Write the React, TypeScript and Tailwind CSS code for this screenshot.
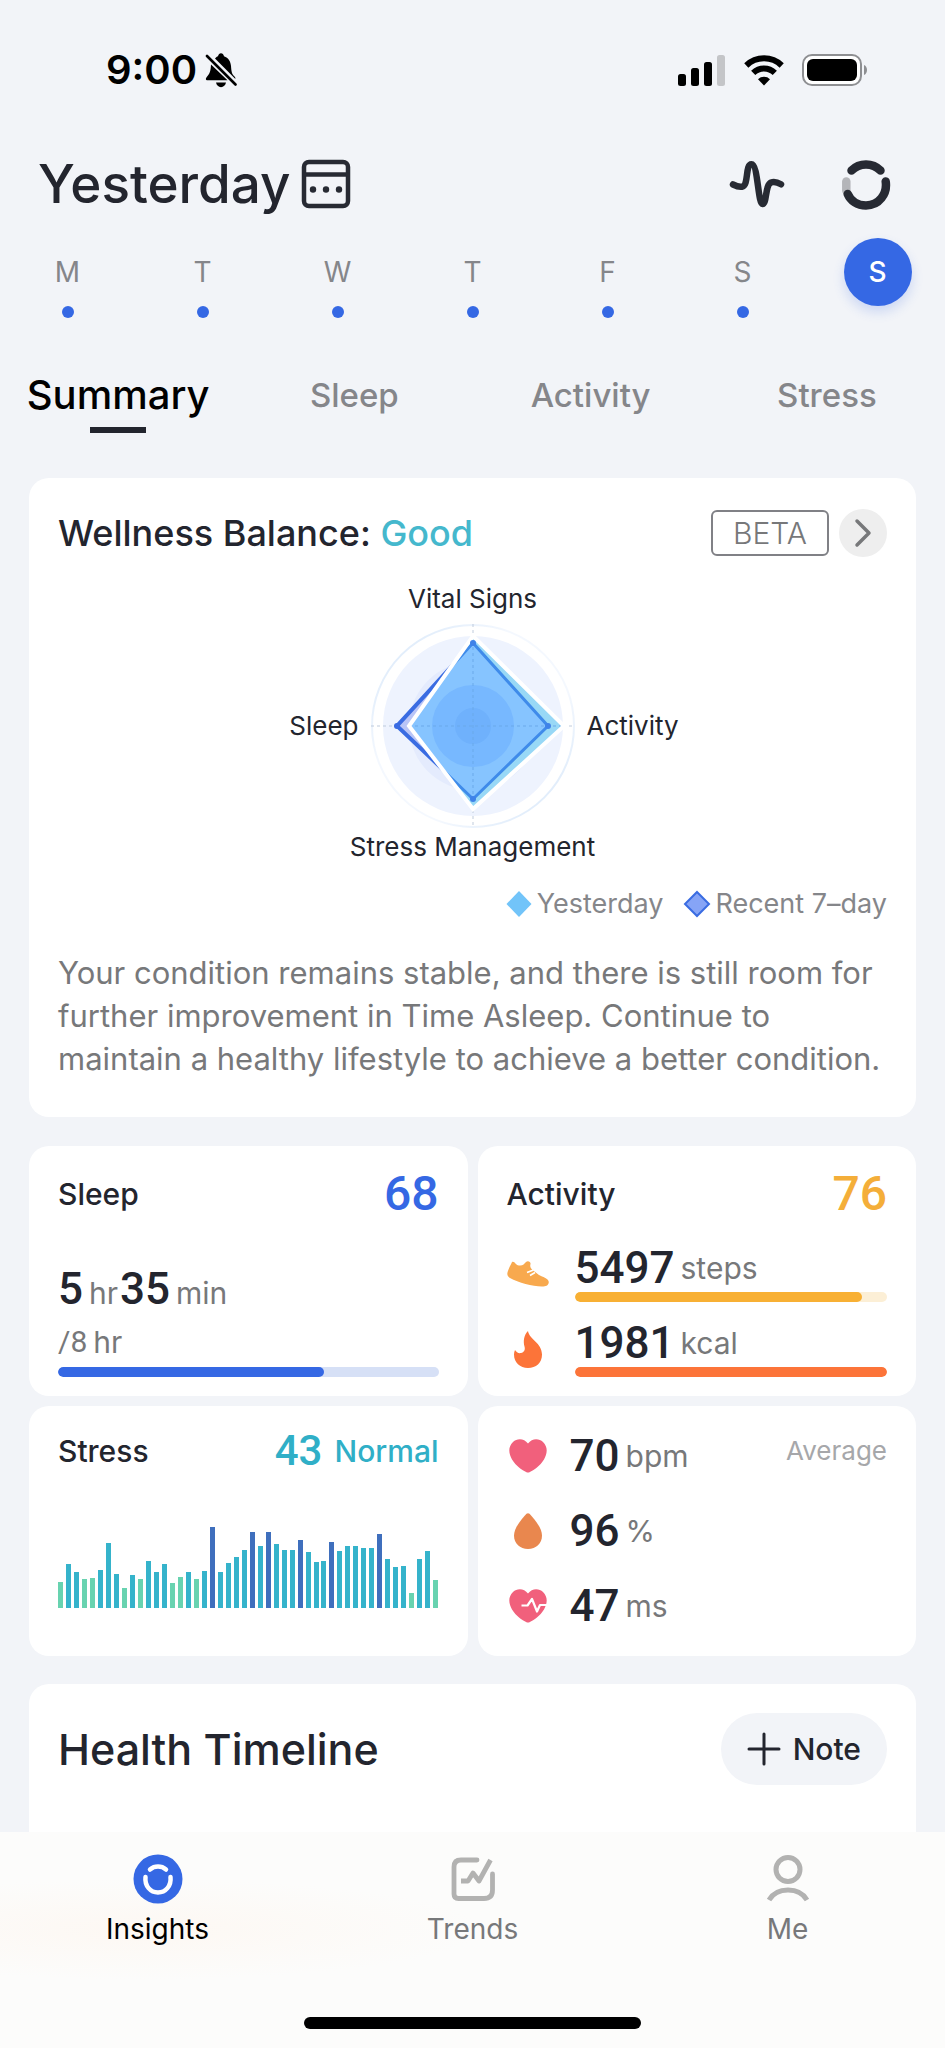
import type { ReactNode } from "react";
import { ChevronRight } from "lucide-react";

const days = ["M", "T", "W", "T", "F", "S", "S"];
const tabs = ["Summary", "Sleep", "Activity", "Stress"];

const stress = [
  26, 44, 36, 29, 30, 38, 65, 34, 20, 33, 29, 47, 36, 44, 25, 31, 36, 29, 37,
  81, 36, 45, 51, 58, 76, 62, 76, 64, 58, 58, 68, 56, 46, 47, 66, 57, 62, 62,
  60, 60, 74, 49, 41, 42, 15, 49, 57, 28,
];

const barColor = (v: number) => {
  if (v <= 31) return "bg-[#68d3b0]";
  if (v >= 66) return "bg-[#3f6fbd]";
  return "bg-[#35b3cb]";
};

/* ---------- icons ---------- */

const BellOff = () => (
  <svg viewBox="0 0 32 35" className="h-[35px] w-8" aria-hidden="true">
    <path
      d="M10 5.5C11 4.2 12 3.6 13 3.2C13.4 1.2 14.6.2 16 .2s2.600 1 3 3c4.500 1.600 6.600 5 7 9.800.4 5 .6 8 3.500 10.600.8.700.9 1.400.9 2.400z"
      fill="#000"
    />
    <path
      d="M6 11.500L22.500 27.200H2C.8 27.200.4 25.500 1.600 24.200 5 20.500 5.700 17.500 6 11.500z"
      fill="#000"
    />
    <path d="M11 29.600h10c-.6 2.800-2.400 4.600-5 4.600s-4.400-1.800-5-4.600z" fill="#000" />
    <path d="M2 3l28.500 28.500" stroke="#000" strokeWidth="2.600" strokeLinecap="round" />
  </svg>
);

const Signal = () => (
  <svg viewBox="0 0 48 31" className="h-[31px] w-12" aria-hidden="true">
    <rect x="0" y="19" width="8" height="12" rx="2.500" />
    <rect x="13" y="13" width="8" height="18" rx="2.500" />
    <rect x="26" y="7" width="8" height="24" rx="2.500" />
    <rect x="39" y="0" width="8" height="31" rx="2.500" fill="#c4c5c8" />
  </svg>
);

const Wifi = () => (
  <svg viewBox="0 0 40 31" className="h-[31px] w-10" aria-hidden="true">
    <g fill="none" stroke="#000" strokeWidth="6">
      <path d="M2.300 10.500a25.500 25.500 0 0 1 35.400 0" />
      <path d="M9.200 17.800a15.500 15.500 0 0 1 21.600 0" />
    </g>
    <path d="M20 30.500l-6-6.200a8.600 8.600 0 0 1 12 0z" />
  </svg>
);

const Battery = () => (
  <svg viewBox="0 0 66 32" className="h-8 w-[66px]" aria-hidden="true">
    <rect x="1" y="1" width="58" height="30" rx="9" fill="#fff" stroke="#8e8f92" strokeWidth="2" />
    <rect x="5" y="5" width="50" height="22" rx="6" />
    <path d="M62 11c4 1.500 4 8.500 0 10z" fill="#8e8f92" />
  </svg>
);

const CalendarIcon = () => (
  <svg viewBox="0 0 50 50" className="size-[50px]" fill="none" stroke="#272a33" strokeWidth="4.500">
    <rect x="3" y="3" width="44" height="44" rx="5" />
    <path d="M3 15.500h44" />
    <g fill="#272a33" stroke="none">
      <circle cx="12" cy="30.500" r="3.200" />
      <circle cx="25" cy="30.500" r="3.200" />
      <circle cx="38" cy="30.500" r="3.200" />
    </g>
  </svg>
);

const PulseIcon = () => (
  <svg viewBox="0 0 56 48" className="h-12 w-14" fill="none" stroke="#272a33" strokeWidth="6.500" strokeLinecap="round">
    <path d="M4 24.500c3 1.500 6 2.700 9 2.200 7-1 3-22.500 9.500-22.500S29 44 33.500 44 36 25 42 22.500c3.500-1.200 6.500-.2 10 1.800" />
  </svg>
);

const RingIcon = () => (
  <svg viewBox="0 0 50 52" className="h-[52px] w-[50px]" fill="none" strokeWidth="8.500" strokeLinecap="round">
    <path d="M5.300 23.500v9" stroke="#b4b5b9" />
    <path d="M10.500 12.500a20.500 20.500 0 0 1 29 0" stroke="#272a33" />
    <path d="M44.700 23.500C46.500 36 38 47.500 25 47.500 16 47.500 9.500 42.500 6.700 36" stroke="#272a33" />
  </svg>
);

const ShoeIcon = () => (
  <svg viewBox="0 0 42 26" className="h-[26px] w-[42px]" aria-hidden="true">
    <path
      d="M5 1C8 0 8 4 12 4.500S17 3 19 1c2-2 5 0 4.500 2S23 7 25.500 9L32 14c4 2 8.500 3.500 9.500 6s-1 5.500-5 5.500C27 26 12 22 3 17c-2.500-1.500-3-3.500-2.500-5.500C1.500 7.500 3.500 4.500 5 1z"
      fill="#f8a94e"
    />
    <path d="M20 11.500l6.500-2.500M23 14.500l5-3" stroke="#fff" strokeWidth="1.700" />
  </svg>
);

const FlameIcon = () => (
  <svg viewBox="0 0 28 37" className="h-[37px] w-7" aria-hidden="true">
    <path
      d="M14 0C15 8 28 12 28 23.500 28 32 22 37 14 37 6 37 0 31.500 0 23.500 0 22 .3 20.500 1 19c1.500 2.500 3.500 3.500 6 3 3-.6 4.500-3 3.500-6.500C9 10 10 4 14 0z"
      fill="#fc7439"
    />
  </svg>
);

const HeartIcon = ({ pulse = false }: { pulse?: boolean }) => (
  <svg viewBox="0 0 38 34" className="h-[34px] w-[38px]" aria-hidden="true">
    <path
      d="M19 4.500C15-1 8-1 4 3-1.500 8.500 0 15 3 20.500 7 27 13 31 17.500 33.200q1.500.8 3 0C25 31 31 27 35 20.500 38 15 39.500 8.500 34 3 30-1 23-1 19 4.500z"
      fill="#f1607c"
    />
    {pulse && (
      <path d="M12.500 16.500h6L23 10l5 12.500 3-6.500h8" fill="none" stroke="#fff" strokeWidth="2.200" strokeLinejoin="round" />
    )}
  </svg>
);

const DropIcon = () => (
  <svg viewBox="0 0 28 36" className="h-9 w-7" aria-hidden="true">
    <path
      d="M12.500.8Q14-.4 15.500.8C21 7 28 15 28 22.500 28 30.500 22 36 14 36S0 30.500 0 22.500C0 15 7 7 12.500.8z"
      fill="#e9874e"
    />
  </svg>
);

const PlusIcon = () => (
  <svg viewBox="0 0 34 34" className="size-[34px]" fill="none" stroke="#23252e" strokeWidth="3" strokeLinecap="round">
    <path d="M17 2v30M2 17h30" />
  </svg>
);

const InsightsIcon = () => (
  <svg viewBox="0 0 50 50" className="size-[50px]" fill="none" stroke="#fff" strokeWidth="4.500" strokeLinecap="round">
    <circle cx="25" cy="25" r="24.500" fill="#3568e4" stroke="none" />
    <path d="M17 15.500a12.500 12.500 0 0 1 16 0" />
    <path d="M12.500 23c-1 9 5 15.500 12.500 15.500S38.500 32 37.500 23" />
  </svg>
);

const TrendsIcon = () => (
  <svg viewBox="0 0 50 50" className="size-[50px]" fill="none" stroke="#b2b2b1" strokeWidth="4.800">
    <path d="M29 6H13Q6 6 6 13V40Q6 44.500 10.500 44.500H36Q44.500 44.500 44.500 36V20" strokeLinecap="round" />
    <path d="M13 27h7l5-8 6 8 11.500-21" strokeLinejoin="round" />
  </svg>
);

const MeIcon = () => (
  <svg viewBox="0 0 50 50" className="size-[50px]" fill="none" stroke="#b2b2b1" strokeWidth="5">
    <circle cx="25" cy="15.500" r="12" />
    <path d="M6 46c3.500-6 10-10 19-10s15.500 4 19 10" />
  </svg>
);

const RadarChart = () => (
  <svg viewBox="0 0 204 204" className="size-[204px]" role="img" aria-label="Wellness balance chart">
    <defs>
      <linearGradient id="ring" x1="0" y1="0" x2="1" y2="1">
        <stop offset="0" stopColor="#d5e6f9" />
        <stop offset=".35" stopColor="#f4f8fe" />
        <stop offset=".65" stopColor="#f4f8fe" />
        <stop offset="1" stopColor="#d5e6f9" />
      </linearGradient>
      <clipPath id="inner">
        <path d="M102 12L193 102 102 185 38 102z" />
      </clipPath>
    </defs>
    <circle cx="102" cy="102" r="101" fill="#fff" stroke="url(#ring)" strokeWidth="2" />
    <circle cx="102" cy="102" r="90" fill="#eef3fe" />
    <circle cx="102" cy="102" r="64" fill="#e4ebfd" />
    <path d="M102 0V204M0 102H204" stroke="#bfcbdc" strokeWidth="1" strokeDasharray="3 3" />
    <path d="M102 19L177 102 102 174 26 102z" fill="#b9c5f7" stroke="#3a6ce2" strokeWidth="4" />
    <path d="M102 12L193 102 102 185 38 102z" fill="#98d8f6" />
    <g clipPath="url(#inner)">
      <path d="M102 19L177 102 102 175 26 102z" fill="#86c4ff" stroke="#3f8bea" strokeWidth="3" />
      <circle cx="102" cy="102" r="41" fill="#77b8ff" />
      <circle cx="102" cy="102" r="18" fill="#6fb1fc" />
      <path d="M102 17V176M38 102H191" stroke="#6aa9ea" strokeWidth="1" strokeDasharray="3 3" />
    </g>
    <path d="M102 12L193 102 102 185 38 102z" fill="none" stroke="#fff" strokeWidth="4" />
    <g fill="#3f82e8">
      <circle cx="102" cy="19" r="3" />
      <circle cx="177" cy="102" r="3" />
      <circle cx="102" cy="175" r="3" />
      <circle cx="26" cy="102" r="3" fill="#3a6ce2" />
    </g>
  </svg>
);

/* ---------- building blocks ---------- */

const Card = ({ className = "", children }: { className?: string; children: ReactNode }) => (
  <section className={`rounded-[20px] bg-white px-[29px] ${className}`}>{children}</section>
);

const Metric = ({ value, unit, baseline = false }: { value: string; unit: string; baseline?: boolean }) => (
  <span className={`flex h-11 gap-[6px] ${baseline ? "items-baseline" : "items-center"}`}>
    <span className="font-['Roboto',sans-serif] text-[44px] leading-[44px] font-medium text-[#23252e]">
      {value}
    </span>
    <span className="text-[30px] leading-[30px] text-[#77787a]">{unit}</span>
  </span>
);

const Progress = ({ value, track, fill }: { value: number; track: string; fill: string }) => (
  <div className={`h-[10px] w-full overflow-hidden rounded-full ${track}`}>
    <div className={`h-full rounded-full ${fill}`} style={{ width: `${value}%` }} />
  </div>
);

const NavItem = ({ icon, label, active = false }: { icon: ReactNode; label: string; active?: boolean }) => (
  <a href="#" className={`flex flex-col items-center gap-2 ${active ? "text-black" : "text-[#77787a]"}`}>
    {icon}
    <span className="text-[28px] leading-[34px]">{label}</span>
  </a>
);

export default function App() {
  return (
    <div className="flex min-h-screen flex-col bg-[#f2f4f8] font-['Inter',sans-serif] text-[#23252e]">
      {/* Status bar */}
      <div className="flex h-[140px] items-center justify-between pr-[77px] pl-[106px]">
        <div className="flex items-center gap-2">
          <span className="text-[40px] font-semibold text-black">9:00</span>
          <BellOff />
        </div>
        <div className="flex items-center gap-[18px]">
          <Signal />
          <Wifi />
          <Battery />
        </div>
      </div>

      {/* Header */}
      <header className="flex h-[88px] items-center justify-between pr-[54px] pl-[38px]">
        <button type="button" className="flex items-center gap-[10px]">
          <h1 className="text-[53px] leading-[60px] font-medium">Yesterday</h1>
          <CalendarIcon />
        </button>
        <div className="flex items-center gap-14">
          <button type="button" aria-label="Measure">
            <PulseIcon />
          </button>
          <button type="button" aria-label="Ring">
            <RingIcon />
          </button>
        </div>
      </header>

      {/* Week strip */}
      <div className="grid grid-cols-7 pt-[10px]">
        {days.map((day, i) => {
          const selected = i === days.length - 1;
          return (
            <button key={i} type="button" className="flex flex-col items-center">
              <span
                className={`flex size-[68px] items-center justify-center rounded-full text-[28px] ${
                  selected
                    ? "bg-[#3568e4] font-medium text-white shadow-[0_6px_12px_rgba(53,104,228,0.2)]"
                    : "text-[#85868a]"
                }`}
              >
                {day}
              </span>
              {!selected && <span className="size-3 rounded-full bg-[#3568e4]" />}
            </button>
          );
        })}
      </div>

      {/* Tabs */}
      <nav className="mt-[47px] grid grid-cols-4">
        {tabs.map((tab, i) => (
          <button key={tab} type="button" className="flex h-[68px] flex-col items-center justify-between">
            <span
              className={`leading-[60px] font-medium ${
                i === 0 ? "text-[40px] text-black" : "text-[33px] text-[#85868a]"
              }`}
            >
              {tab}
            </span>
            {i === 0 && <span className="h-[6px] w-14 bg-[#23252e]" />}
          </button>
        ))}
      </nav>

      <main className="flex flex-1 flex-col px-[29px] pt-[45px]">
        {/* Wellness balance */}
        <Card className="pt-[31px] pb-[37px]">
          <div className="flex items-center justify-between">
            <h2 className="text-[36px] leading-[48px] font-medium">
              Wellness Balance: <span className="text-[#45b8cd]">Good</span>
            </h2>
            <div className="flex items-center gap-[10px]">
              <span className="flex h-[46px] items-center rounded-md border-2 border-[#808186] px-5 text-[30px] font-light text-[#77787a]">
                BETA
              </span>
              <button
                type="button"
                aria-label="Details"
                className="flex size-12 items-center justify-center rounded-full bg-[#eeeeee] text-[#77787a]"
              >
                <ChevronRight className="size-12" strokeWidth={1.75} />
              </button>
            </div>
          </div>

          <div className="mt-[25px] text-center text-[26px] leading-[34px]">
            <p>Vital Signs</p>
            <div className="mt-2 grid grid-cols-[1fr_auto_1fr] items-center gap-3">
              <span className="text-right">Sleep</span>
              <RadarChart />
              <span className="text-left">Activity</span>
            </div>
            <p className="mt-[2px]">Stress Management</p>
          </div>

          <div className="mt-[23px] flex justify-end gap-5 text-[27px] leading-[34px] text-[#85868a]">
            <span className="flex items-center gap-1">
              <svg viewBox="0 0 28 28" className="size-7">
                <path d="M14 1l12.500 13L14 27 1.500 14z" fill="#72c4f9" />
              </svg>
              Yesterday
            </span>
            <span className="flex items-center gap-1">
              <svg viewBox="0 0 28 28" className="size-7">
                <path d="M14 2l12 12-12 12L2 14z" fill="#86a4f6" stroke="#3a6ce2" strokeWidth="2" />
              </svg>
              Recent 7–day
            </span>
          </div>

          <p className="mt-[30px] text-[31px] leading-[43px] text-[#77787a]">
            Your condition remains stable, and there is still room for further
            improvement in Time Asleep. Continue to maintain a healthy
            lifestyle to achieve a better condition.
          </p>
        </Card>

        {/* Metric cards */}
        <div className="mt-[29px] grid grid-cols-2 gap-[10px]">
          <Card className="flex h-[250px] flex-col pt-5 pb-[19px]">
            <div className="flex h-[56px] items-center justify-between">
              <h2 className="text-[30px] font-medium">Sleep</h2>
              <span className="font-['Roboto',sans-serif] text-[48px] font-medium text-[#3568e4]">68</span>
            </div>
            <div className="mt-auto">
              <div className="flex gap-[2px]">
                <Metric value="5" unit="hr" baseline />
                <Metric value="35" unit="min" baseline />
              </div>
              <p className="mt-[14px] mb-2 flex gap-[6px] text-[30px] leading-[34px] text-[#77787a]">
                <span className="font-['Roboto',sans-serif]">/8</span>
                <span>hr</span>
              </p>
              <Progress value={70} track="bg-[#d6e0f6]" fill="bg-[#3568e4]" />
            </div>
          </Card>

          <Card className="flex h-[250px] flex-col pt-5 pb-[19px]">
            <div className="flex h-[56px] items-center justify-between">
              <h2 className="text-[30px] font-medium">Activity</h2>
              <span className="font-['Roboto',sans-serif] text-[48px] font-medium text-[#f4ae39]">76</span>
            </div>
            <div className="mt-auto grid grid-cols-[42px_1fr] items-center gap-x-[26px] gap-y-[19px]">
              <ShoeIcon />
              <div>
                <Metric value="5497" unit="steps" />
                <div className="mt-[2px]">
                  <Progress value={92} track="bg-[#fcefd6]" fill="bg-[#f8b034]" />
                </div>
              </div>
              <span className="flex justify-center">
                <FlameIcon />
              </span>
              <div>
                <Metric value="1981" unit="kcal" />
                <div className="mt-[2px]">
                  <Progress value={100} track="bg-[#fde3d6]" fill="bg-[#fc7439]" />
                </div>
              </div>
            </div>
          </Card>

          <Card className="flex h-[250px] flex-col pt-5 pb-[48px]">
            <div className="flex h-[50px] items-center justify-between">
              <h2 className="text-[30px] font-medium">Stress</h2>
              <p className="flex items-center gap-3 font-medium text-[#30afc7]">
                <span className="font-['Roboto',sans-serif] text-[42px] leading-[50px]">43</span>
                <span className="text-[30px]">Normal</span>
              </p>
            </div>
            <div className="mt-auto flex items-end justify-between">
              {stress.map((v, i) => (
                <span key={i} className={`w-[5px] ${barColor(v)}`} style={{ height: v }} />
              ))}
            </div>
          </Card>

          <Card className="flex h-[250px] items-start justify-between pt-[28px]">
            <div className="grid grid-cols-[42px_auto] items-center gap-x-[21px] gap-y-[31px]">
              <span className="flex justify-center">
                <HeartIcon />
              </span>
              <Metric value="70" unit="bpm" />
              <span className="flex justify-center">
                <DropIcon />
              </span>
              <Metric value="96" unit="%" />
              <span className="flex justify-center">
                <HeartIcon pulse />
              </span>
              <Metric value="47" unit="ms" />
            </div>
            <span className="text-[26px] leading-[34px] text-[#a6a7aa]">Average</span>
          </Card>
        </div>

        {/* Health timeline */}
        <section className="mt-[28px] flex flex-1 items-start justify-between rounded-t-[20px] bg-white px-[29px] pt-[29px] pb-[47px]">
          <h2 className="text-[43px] leading-[72px] font-medium">Health Timeline</h2>
          <button
            type="button"
            className="flex h-[72px] items-center gap-3 rounded-full bg-[#f2f4f8] px-[26px] text-[30px] font-medium"
          >
            <PlusIcon />
            Note
          </button>
        </section>
      </main>

      {/* Bottom navigation */}
      <footer className="flex h-[216px] flex-col justify-between bg-[#fcfcfb] bg-radial-[at_15%_45%] from-[#fdf8f3] to-[#fcfcfb] to-30% pt-[22px] pb-[19px]">
        <nav className="grid grid-cols-3">
          <NavItem icon={<InsightsIcon />} label="Insights" active />
          <NavItem icon={<TrendsIcon />} label="Trends" />
          <NavItem icon={<MeIcon />} label="Me" />
        </nav>
        <div className="mx-auto h-3 w-[337px] rounded-full bg-black" />
      </footer>
    </div>
  );
}
